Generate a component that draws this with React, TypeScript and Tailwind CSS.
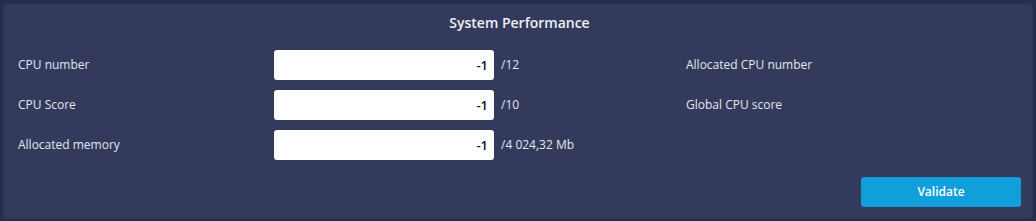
import React, { useState } from 'react';

interface RowProps {
  label: string;
  value: string;
  suffix: string;
  info?: string;
  onChange: (v: string) => void;
}

const Row: React.FC<RowProps> = ({ label, value, suffix, info, onChange }) => (
  <>
    <div className="text-[12px] text-[#e4e7f0]">{label}</div>
    <input
      value={value}
      onChange={(e) => onChange(e.target.value)}
      className="h-[30px] w-[220px] rounded-[3px] bg-white pl-2 pr-[6px] text-right text-[13px] font-semibold text-[#111] outline-none"
    />
    <div className="pl-[7px] text-[12px] text-[#e4e7f0]">{suffix}</div>
    <div className="text-[12px] text-[#e4e7f0]">{info}</div>
  </>
);

export default function App() {
  const [cpu, setCpu] = useState('-1');
  const [score, setScore] = useState('-1');
  const [memory, setMemory] = useState('-1');

  return (
    <div className="h-[221px] w-[1036px] bg-[#272d4c] p-[3px] font-['Open_Sans',sans-serif]">
      <div className="flex h-[216px] flex-col rounded-[4px] border border-[#2d3454] bg-[#333a5c] pl-[14px] pr-[11px]">
        <h2 className="mt-[8px] text-center text-[14px] font-semibold text-[#eef0f6]">System Performance</h2>

        <div className="mt-[17px] grid grid-cols-[256px_220px_192px_1fr] items-center gap-y-[10px]">
          <Row label="CPU number" value={cpu} suffix="/12" info="Allocated CPU number" onChange={setCpu} />
          <Row label="CPU Score" value={score} suffix="/10" info="Global CPU score" onChange={setScore} />
          <Row label="Allocated memory" value={memory} suffix="/4 024,32 Mb" onChange={setMemory} />
        </div>

        <div className="mt-[17px] flex justify-end">
          <button className="h-[30px] w-[160px] rounded-[3px] bg-[#109fda] text-[12px] font-semibold text-white">
            Validate
          </button>
        </div>
      </div>
    </div>
  );
}
